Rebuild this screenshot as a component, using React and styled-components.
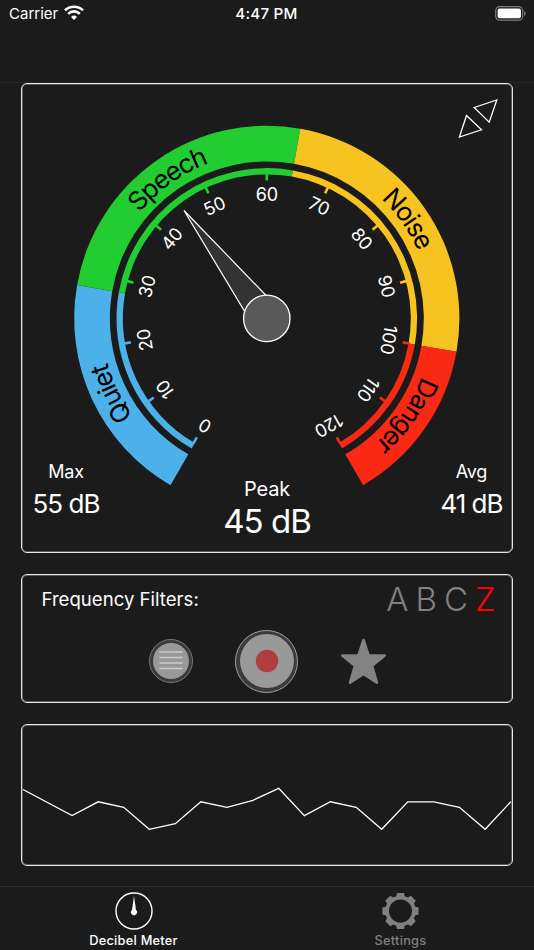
import React, { useState } from 'react';
import styled, { createGlobalStyle } from 'styled-components';

const GlobalStyle = createGlobalStyle`
  * {
    box-sizing: border-box;
  }

  body {
    margin: 0;
    background: #1b1b1b;
    color: #fff;
    font-family: Inter, "Liberation Sans", sans-serif;
  }

  button {
    padding: 0;
    border: 0;
    background: none;
    color: inherit;
    font: inherit;
    cursor: pointer;
  }
`;

const Screen = styled.div`
  width: 534px;
  height: 950px;
  display: flex;
  flex-direction: column;
  overflow: hidden;
`;

const StatusBar = styled.header`
  height: 83px;
  flex: none;
  display: grid;
  grid-template-columns: 1fr auto 1fr;
  align-items: start;
  padding: 5px 8px 0 9px;
  border-bottom: 1px solid #262626;
  line-height: 18px;
`;

const Carrier = styled.div`
  display: flex;
  gap: 6px;
  font-size: 15px;
`;

const Clock = styled.div`
  font-size: 15.2px;
  font-weight: 500;
  letter-spacing: 0.2px;
  margin-right: 2px;
`;

const BatteryIcon = styled.svg`
  justify-self: end;
  margin-top: 1px;
`;

const Main = styled.main`
  flex: 1;
  display: flex;
  flex-direction: column;
  gap: 21px;
  padding: 0 21px;
`;

const Card = styled.section`
  position: relative;
  height: ${({ $height }) => $height}px;
  flex: none;
  border: 1px solid #e6e8e6;
  border-radius: 6px;
  box-shadow: inset 0 0 0 1px rgba(230, 232, 230, 0.3);
`;

const ExpandButton = styled.button`
  position: absolute;
  top: 14px;
  right: 13.5px;
  width: 42px;
  height: 42px;
`;

const GaugeSvg = styled.svg`
  display: block;
  width: 100%;
  height: 376px;
  overflow: visible;
`;

const ScaleLabel = styled.text`
  fill: #fff;
  font-size: 18px;
  letter-spacing: -0.2px;
  text-anchor: middle;
`;

const ZoneLabel = styled.text`
  fill: #000;
  font-size: 26px;
  letter-spacing: -1.3px;
  text-anchor: middle;
`;

const Readings = styled.div`
  display: grid;
  grid-template-columns: 88px 1fr 81px;
`;

const Reading = styled.div`
  display: flex;
  flex-direction: column;
  align-items: center;
  padding-top: ${({ $large }) => ($large ? 17 : 0)}px;
  margin-left: ${({ $large }) => ($large ? -7 : 0)}px;
  white-space: nowrap;

  span {
    font-size: ${({ $large }) => ($large ? 20 : 18)}px;
    line-height: 24px;
    letter-spacing: -0.2px;
  }

  strong {
    font-size: ${({ $large }) => ($large ? 33 : 26)}px;
    font-weight: 400;
    line-height: 40px;
    letter-spacing: -1px;
  }
`;

const FilterRow = styled.div`
  display: flex;
  justify-content: space-between;
  align-items: center;
  height: 48px;
  padding: 0 16.5px 0 19.5px;
  font-size: 18.6px;
`;

const FilterOptions = styled.div`
  display: flex;
  gap: 7px;
`;

const FilterOption = styled.button`
  && {
    color: ${({ $active }) => ($active ? '#ff0000' : '#818181')};
    font-size: 33px;
    font-weight: 350;
    line-height: 40px;
  }
`;

const Actions = styled.div`
  display: grid;
  grid-template-columns: 44px 63px 48px;
  justify-content: center;
  align-items: center;
  column-gap: 42px;
  height: 76px;
  padding-left: 3px;
`;

const RoundButton = styled.button`
  && {
    width: ${({ $size }) => $size}px;
    height: ${({ $size }) => $size}px;
    display: grid;
    place-items: center;
    border: 1px solid ${({ $ring }) => $ring};
    border-radius: 50%;
    background: #3b3b3b;
  }
`;

const StarButton = styled.button`
  && {
    height: 48px;
  }
`;

const Chart = styled.svg`
  display: block;
  width: 100%;
  height: 100%;
`;

const TabBar = styled.nav`
  height: 64px;
  flex: none;
  display: grid;
  grid-template-columns: 1fr 1fr;
  border-top: 1px solid #2d2d2d;
`;

const Tab = styled.button`
  && {
    display: flex;
    flex-direction: column;
    align-items: center;
    padding-top: 4px;
    color: ${({ $active }) => ($active ? '#fff' : '#808080')};
    font-size: 12.8px;
    font-weight: 500;
    line-height: 16px;
    letter-spacing: 0.25px;
  }

  svg {
    margin-bottom: 2px;
  }
`;

const CX = 244.8;
const CY = 234.4;

const zones = [
  { name: 'Quiet', from: 0, to: 28, color: '#4cb1e8', nudge: -1 },
  { name: 'Speech', from: 28, to: 64, color: '#22cd32', nudge: -0.6 },
  { name: 'Noise', from: 64, to: 100, color: '#f6c321', nudge: -0.3 },
  { name: 'Danger', from: 100, to: 120, color: '#f92914', nudge: -0.3 },
];

const toAngle = (db) => -150 + db * 2.5;

const point = (r, deg) => {
  const a = (deg * Math.PI) / 180;
  return `${(CX + r * Math.sin(a)).toFixed(2)} ${(CY - r * Math.cos(a)).toFixed(2)}`;
};

const band = (outer, inner, from, to) =>
  `M${point(outer, from)} A${outer} ${outer} 0 0 1 ${point(outer, to)} L${point(inner, to)} A${inner} ${inner} 0 0 0 ${point(inner, from)} Z`;

const tickColor = (db) => {
  const zone = zones.find((z) => db < z.to) || zones[3];
  return zone.color;
};

const Gauge = ({ value }) => {
  const ticks = Array.from({ length: 13 }, (_, i) => i * 10);

  return (
    <GaugeSvg viewBox="0 0 490 376">
      {zones.map((z) => {
        const from = toAngle(z.from);
        const to = toAngle(z.to);
        const mid = (from + to) / 2 + z.nudge;
        return (
          <g key={z.name}>
            <path d={band(192.6, 157, from, to)} fill={z.color} />
            <path d={band(150.3, 144, from, to)} fill={z.color} />
            <path
              id={`arc-${z.name}`}
              d={`M${point(165.5, mid - 40)} A165.5 165.5 0 0 1 ${point(165.5, mid + 40)}`}
              fill="none"
            />
            <ZoneLabel>
              <textPath href={`#arc-${z.name}`} startOffset="50%">{z.name}</textPath>
            </ZoneLabel>
          </g>
        );
      })}

      {ticks.map((db) => (
        <g key={db} transform={`rotate(${toAngle(db)} ${CX} ${CY})`}>
          <rect
            x={CX - (db === 0 ? 0.2 : db === 120 ? 2.4 : 1.3)}
            y={CY - 145}
            width="2.6"
            height="7"
            fill={tickColor(db)}
          />
          <ScaleLabel x={CX} y={CY - 117.5}>{db}</ScaleLabel>
        </g>
      ))}

      <path
        d={`M${CX} ${CY - 136} L${CX + 15.5} ${CY} H${CX - 15.5} Z`}
        transform={`rotate(${toAngle(value)} ${CX} ${CY})`}
        fill="#333"
        stroke="#fff"
        strokeWidth="1.2"
      />
      <circle cx={CX} cy={CY} r="23.2" fill="#595959" stroke="#fff" strokeWidth="1.3" />
    </GaugeSvg>
  );
};

const history = [
  [1, 64.5], [50, 90.5], [76, 76.8], [101.5, 82.3], [127, 104.3], [153, 98.7], [178.5, 76.8],
  [204.5, 82.3], [230.5, 75.3], [256.2, 63.3], [281.8, 90.6], [307.8, 76.8], [333.5, 82.3],
  [359, 104.3], [385, 76.8], [411, 76.8], [436.5, 82.3], [462.2, 104.3], [487.8, 76.8],
];

const gearPath = () => {
  const teeth = 8;
  const pts = [];
  for (let i = 0; i < teeth; i += 1) {
    const base = (i * 360) / teeth;
    [[-16, 15.4], [-11, 18.4], [11, 18.4], [16, 15.4]].forEach(([d, r]) => {
      const a = ((base + d) * Math.PI) / 180;
      pts.push(`${(19 + r * Math.sin(a)).toFixed(2)} ${(19 - r * Math.cos(a)).toFixed(2)}`);
    });
  }
  return `M${pts.join('L')}Z M30.5 19a11.5 11.5 0 1 0-23 0a11.5 11.5 0 1 0 23 0Z`;
};

const App = () => {
  const [filter, setFilter] = useState('Z');
  const [tab, setTab] = useState('meter');

  return (
    <Screen>
      <GlobalStyle />
      <StatusBar>
        <Carrier>
          Carrier
          <svg width="20" height="15" viewBox="0 0 20 15" fill="none" stroke="#fff" strokeWidth="2.6">
            <path d="M1 5.4a12.8 12.8 0 0 1 18 0" />
            <path d="M4.2 8.8a8.2 8.2 0 0 1 11.6 0" />
            <path d="M10 15L7 12a4.3 4.3 0 0 1 6 0Z" fill="#fff" stroke="none" />
          </svg>
        </Carrier>
        <Clock>4:47 PM</Clock>
        <BatteryIcon width="31" height="15" viewBox="0 0 31 15">
          <rect x="0.7" y="0.7" width="27" height="13.4" rx="3.8" fill="none" stroke="#7d7d7d" strokeWidth="1.2" />
          <rect x="2.6" y="2.5" width="23.4" height="9.8" rx="2" fill="#fff" />
          <path d="M29.2 5v4.8c1-.4 1.6-1.3 1.6-2.4s-.6-2-1.6-2.4Z" fill="#7d7d7d" />
        </BatteryIcon>
      </StatusBar>

      <Main>
        <Card $height={470}>
          <ExpandButton aria-label="Expand">
            <svg width="42" height="42" viewBox="0 0 42 42" fill="none" stroke="#fff" strokeWidth="1.3">
              <path d="M17.2 9.5L39.8 2L32.2 24.1Z" />
              <path d="M9.5 17.5L24.5 31.8L2.4 39.1Z" />
            </svg>
          </ExpandButton>
          <Gauge value={45} />
          <Readings>
            <Reading>
              <span>Max</span>
              <strong>55 dB</strong>
            </Reading>
            <Reading $large>
              <span>Peak</span>
              <strong>45 dB</strong>
            </Reading>
            <Reading>
              <span>Avg</span>
              <strong>41 dB</strong>
            </Reading>
          </Readings>
        </Card>

        <Card $height={129}>
          <FilterRow>
            Frequency Filters:
            <FilterOptions>
              {['A', 'B', 'C', 'Z'].map((f) => (
                <FilterOption key={f} $active={f === filter} onClick={() => setFilter(f)}>
                  {f}
                </FilterOption>
              ))}
            </FilterOptions>
          </FilterRow>
          <Actions>
            <RoundButton $size={44} $ring="#777" aria-label="List">
              <svg width="36" height="36" viewBox="0 0 36 36">
                <circle cx="18" cy="18" r="18" fill="#999" />
                <path d="M6.5 9h23M6.5 14.6h23M6.5 20h23M6.5 25.4h23" stroke="#ccc" strokeWidth="1.5" />
              </svg>
            </RoundButton>
            <RoundButton $size={63} $ring="#a0a0a0" aria-label="Record">
              <svg width="54" height="54" viewBox="0 0 54 54">
                <circle cx="27" cy="27" r="27" fill="#999" />
                <circle cx="27" cy="27" r="11.2" fill="#b03e3e" />
              </svg>
            </RoundButton>
            <StarButton aria-label="Favorites">
              <svg width="48" height="48" viewBox="0 0 48 48" fill="#838383" stroke="#838383" strokeWidth="2.6" strokeLinejoin="round">
                <path d="M23.5 3L28.5 18.2L44.7 18.5L32.1 28.8L36.9 45.7L23.5 36.8L10.1 45.7L14.9 28.8L2.3 18.5L18.5 18.2Z" />
              </svg>
            </StarButton>
          </Actions>
        </Card>

        <Card $height={142}>
          <Chart viewBox="0 0 489 140" preserveAspectRatio="none">
            <polyline points={history.map((p) => p.join(',')).join(' ')} fill="none" stroke="#fff" strokeWidth="1.3" />
          </Chart>
        </Card>
      </Main>

      <TabBar>
        <Tab $active={tab === 'meter'} onClick={() => setTab('meter')}>
          <svg width="40" height="40" viewBox="0 0 40 40">
            <circle cx="20" cy="20" r="18" fill="none" stroke="currentColor" strokeWidth="1.4" />
            <path d="M20 5l2 14a3 3 0 1 1-4 0Z" fill="currentColor" />
          </svg>
          Decibel Meter
        </Tab>
        <Tab $active={tab === 'settings'} onClick={() => setTab('settings')}>
          <svg width="40" height="40" viewBox="-0.5 -1 40 40">
            <path d={gearPath()} fill="currentColor" fillRule="evenodd" />
          </svg>
          Settings
        </Tab>
      </TabBar>
    </Screen>
  );
};

export default App;
